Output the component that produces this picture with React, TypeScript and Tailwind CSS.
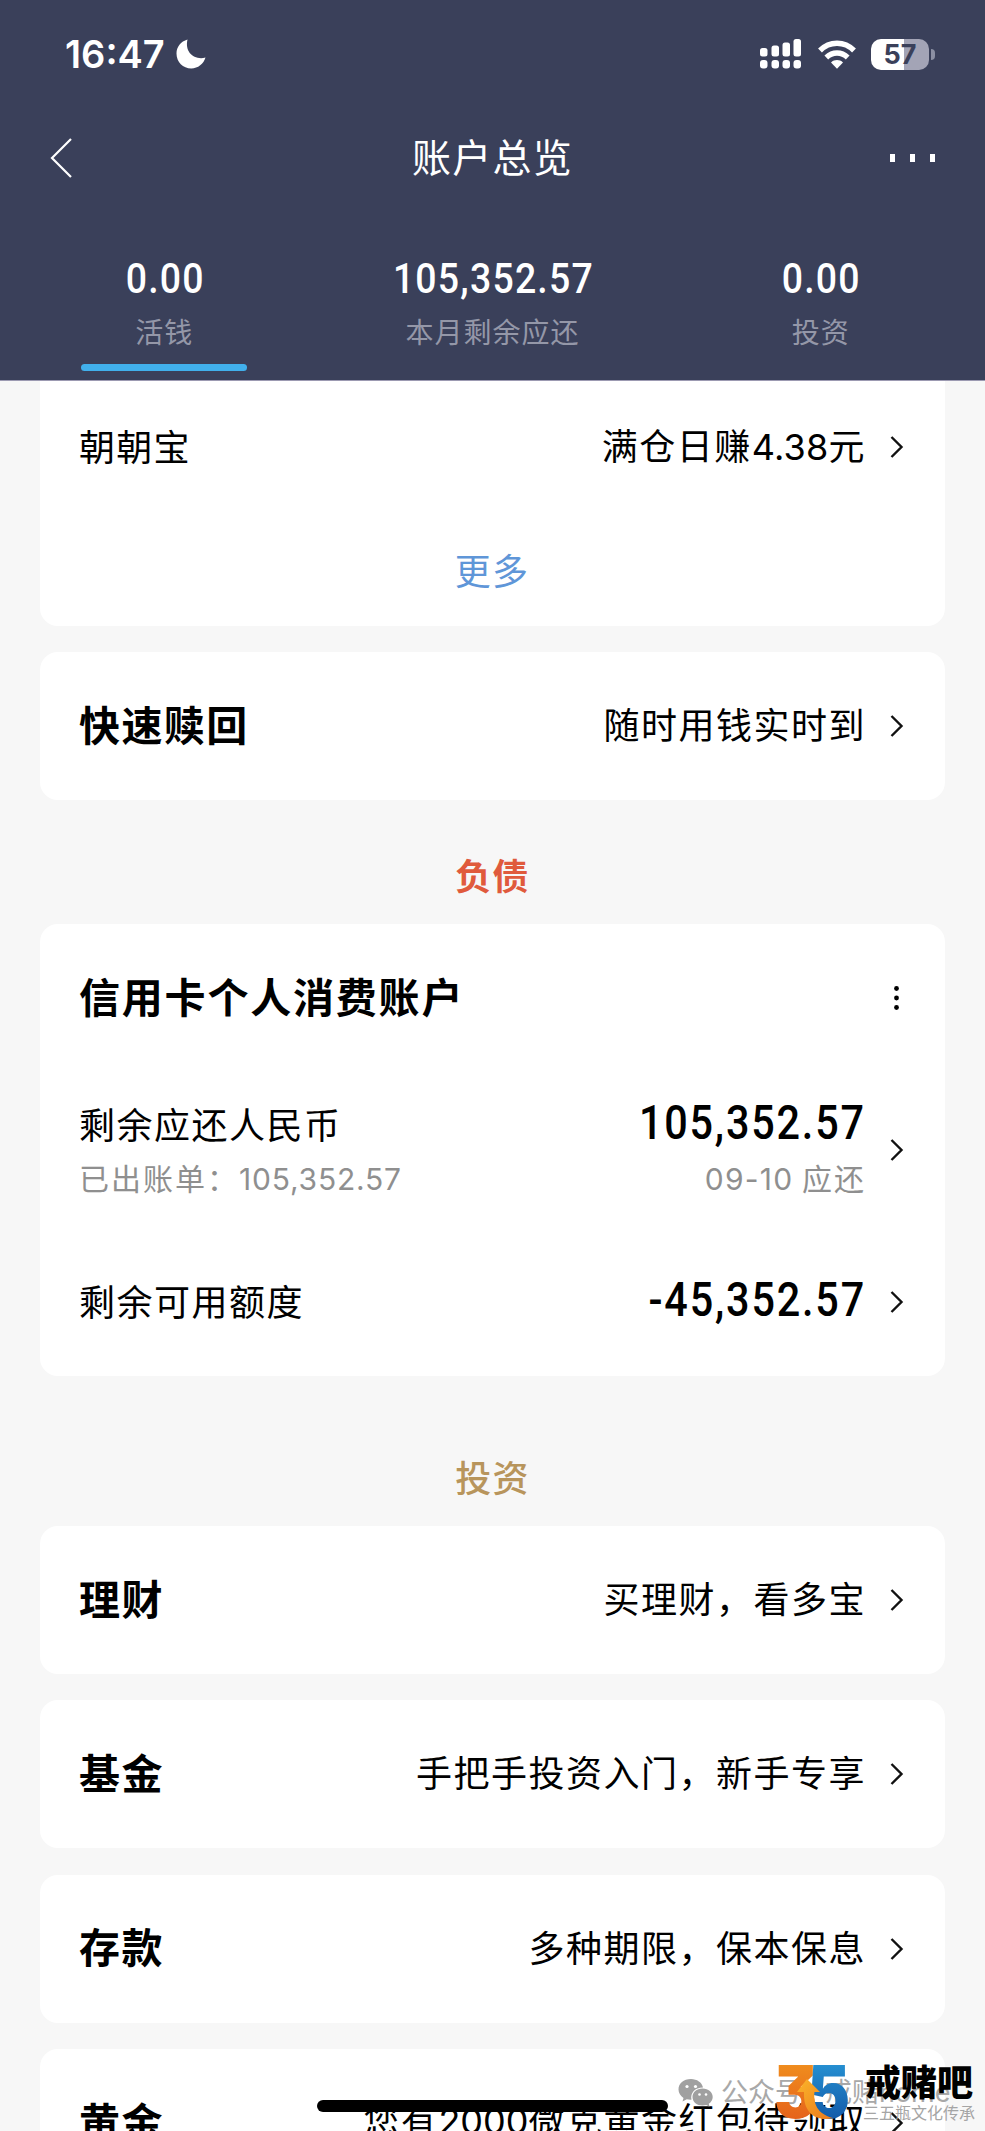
import React from "react";

/**
 * Account overview screen of the mobile bank.
 *
 * From top to bottom:
 * - status bar, navigation bar and the three summary tabs
 * - list of cards grouped by section (cash, debt, investment)
 * - home indicator and the publisher's mark in the bottom corner
 */

type Tab = { amount: string; label: string; active?: boolean };

const tabs: Tab[] = [
  { amount: "0.00", label: "活钱", active: true },
  { amount: "105,352.57", label: "本月剩余应还" },
  { amount: "0.00", label: "投资" },
];

type RowProps = { title: string; hint: React.ReactNode };

const investments: RowProps[] = [
  { title: "理财", hint: "买理财，看多宝" },
  { title: "基金", hint: "手把手投资入门，新手专享" },
  { title: "存款", hint: "多种期限，保本保息" },
  {
    title: "黄金",
    hint: (
      <>
        您有<span className="font-['Inter'] tracking-normal">2000</span>
        微克黄金红包待领取
      </>
    ),
  },
];

const Chevron = () => (
  <svg
    className="ml-[24px] mr-[1px] h-[24px] w-[14px] shrink-0"
    viewBox="0 0 14 24"
    fill="none"
    stroke="#111"
    strokeWidth="2.4"
  >
    <path d="M1.5 2 L11.5 12 L1.5 22" />
  </svg>
);

const StatusBar = () => (
  <div className="flex h-[108px] items-center pl-[65px] pr-[50px]">
    <span className="font-['Inter'] text-[38px] font-semibold leading-none">
      16:47
    </span>
    <svg className="ml-[11px] h-[30px] w-[30px]" viewBox="0 0 30 30" fill="#fff">
      <path d="M11.5 0.5 C4.8 2.4 0.5 8 0.5 14.5 C0.5 23 7 29.5 15.3 29.5 C22 29.5 27.6 25 29.5 18.6 C18 21.5 8.5 13 11.5 0.5 Z" />
    </svg>

    {/* Dual SIM signal */}
    <svg className="ml-auto h-[30px] w-[41px]" viewBox="0 0 41 30" fill="#fff">
      <rect x="0" y="9" width="7.5" height="8.5" rx="2.5" />
      <rect x="11.5" y="6.5" width="7.5" height="11" rx="2.5" />
      <rect x="22.5" y="3.5" width="7.5" height="14" rx="2.5" />
      <rect x="33.5" y="0" width="7.5" height="17.5" rx="2.5" />
      <rect x="0" y="21" width="7.5" height="8.5" rx="3" />
      <rect x="11.5" y="21" width="7.5" height="8.5" rx="3" />
      <rect x="22.5" y="21" width="7.5" height="8.5" rx="3" />
      <rect x="33.5" y="21" width="7.5" height="8.5" rx="3" />
    </svg>
    <svg className="ml-[17px] h-[29px] w-[38px]" viewBox="0 0 38 29" fill="none">
      <path d="M2 10.5 C11.5 0.8 26.5 0.8 36 10.5" stroke="#fff" strokeWidth="5.4" />
      <path d="M8.3 17.5 C14.5 11.5 23.5 11.5 29.7 17.5" stroke="#fff" strokeWidth="5.4" />
      <path d="M13 22.5 C16.5 19.3 21.5 19.3 25 22.5 L19 28.8 Z" fill="#fff" />
    </svg>
    <div className="ml-[15px] flex h-[31px] w-[58px] items-center justify-center rounded-[10px] bg-[linear-gradient(90deg,#fff_57%,#a3a4b6_57%)]">
      <span className="font-['Inter'] text-[27px] font-bold leading-none text-[#3a405a]">
        57
      </span>
    </div>
    <div className="ml-[2px] h-[11px] w-[4px] rounded-r-full bg-[#8b8fa3]" />
  </div>
);

const NavBar = () => (
  <div className="flex h-[100px] items-center justify-between px-[50px]">
    <svg
      className="h-[40px] w-[45px]"
      viewBox="0 0 45 40"
      fill="none"
      stroke="#fff"
      strokeWidth="2.2"
    >
      <path d="M21 1 L2 20 L21 39" />
    </svg>
    <h1 className="-mt-[6px] text-[39px] font-normal leading-none tracking-[1.2px]">
      账户总览
    </h1>
    <div className="flex gap-[15px]">
      <i className="h-[8px] w-[5px] bg-white" />
      <i className="h-[8px] w-[5px] bg-white" />
      <i className="h-[8px] w-[5px] bg-white" />
    </div>
  </div>
);

const SummaryTabs = () => (
  <div className="grid grid-cols-3">
    {tabs.map((tab, i) => (
      <div key={i} className="flex flex-col items-center">
        <span className="scale-x-[0.87] pl-[2px] font-['Roboto'] text-[43px] font-medium leading-[50px] tracking-[1.4px]">
          {tab.amount}
        </span>
        <span className="mt-[8px] text-[28px] leading-[40px] tracking-[1px] text-[#9497a8]">
          {tab.label}
        </span>
        {tab.active && (
          <div className="mt-[13px] h-[7px] w-[166px] rounded-full bg-[#41b0ec]" />
        )}
      </div>
    ))}
  </div>
);

const Row = ({ title, hint }: RowProps) => (
  <div className="flex h-[148px] shrink-0 items-center rounded-[18px] bg-white pl-[39px] pr-[40px]">
    <h2 className="-mt-[5px] text-[41px] font-bold tracking-[1.4px]">{title}</h2>
    <span className="-mt-[6px] ml-auto text-[36px] tracking-[1.5px]">{hint}</span>
    <Chevron />
  </div>
);

const Amount = ({ children }: { children: React.ReactNode }) => (
  <span className="origin-right scale-x-[0.87] font-['Roboto'] text-[47.5px] font-medium leading-[50px] tracking-[2.1px]">
    {children}
  </span>
);

const CreditCard = () => (
  <div className="h-[452px] rounded-[18px] bg-white pl-[39px] pr-[40px]">
    <div className="flex h-[148px] items-center justify-between">
      <h2 className="-mt-[4px] text-[41px] font-bold tracking-[1.8px]">
        信用卡个人消费账户
      </h2>
      <svg className="mr-[6px] h-[24px] w-[5px]" viewBox="0 0 5 24">
        <circle cx="2.5" cy="2.5" r="2.4" />
        <circle cx="2.5" cy="12" r="2.4" />
        <circle cx="2.5" cy="21.5" r="2.4" />
      </svg>
    </div>
    <div className="flex h-[156px] items-center">
      <div className="flex flex-col pt-[2px]">
        <span className="text-[36px] leading-[54px] tracking-[1.5px]">
          剩余应还人民币
        </span>
        <span className="text-[30px] leading-[54px] tracking-[2px] text-[#8f8f8f]">
          已出账单：
          <span className="font-['Inter'] tracking-[0.8px]">105,352.57</span>
        </span>
      </div>
      <div className="ml-auto flex flex-col items-end pt-[3px]">
        <Amount>105,352.57</Amount>
        <span className="pt-[2px] text-[30px] leading-[54px] tracking-[2px] text-[#8f8f8f]">
          <span className="font-['Inter'] tracking-[1.2px]">09-10</span> 应还
        </span>
      </div>
      <Chevron />
    </div>
    <div className="flex h-[148px] items-center">
      <span className="-mt-[4px] text-[36px] tracking-[1.5px]">剩余可用额度</span>
      <span className="-mt-[5px] ml-auto flex">
        <Amount>-45,352.57</Amount>
      </span>
      <Chevron />
    </div>
  </div>
);

/** Publisher's mark lying over the last card. */
const Watermark = () => (
  <div>
    <div className="absolute left-[678px] top-[2078px] flex items-center text-[#a8a8a8]">
      <svg className="h-[28px] w-[35px]" viewBox="0 0 35 28" fill="#a0a0a0">
        <path d="M13 0 C5.5 0 0.5 4.5 0.5 10.5 C0.5 14 2.5 17 5.5 19 L4.5 22.5 L8.8 20.3 C10 20.6 12 20.8 13.5 20.7 C12 14 17 8.5 25 8.5 C24 3.5 19 0 13 0 Z" />
        <path d="M24.5 9.5 C18.5 9.5 14.5 13.3 14.5 18 C14.5 23 19 26.5 24.5 26.5 C26 26.5 27 26.3 28.2 26 L31.5 27.7 L30.8 24.8 C33.2 23.2 34.7 20.8 34.7 18 C34.7 13.3 30.5 9.5 24.5 9.5 Z" />
        <g fill="#fff">
          <circle cx="9" cy="7.5" r="1.6" />
          <circle cx="17.5" cy="7.5" r="1.6" />
          <circle cx="21.5" cy="15.5" r="1.3" />
          <circle cx="28" cy="15.5" r="1.3" />
        </g>
      </svg>
      <span className="-mt-[2px] ml-[8px] whitespace-pre text-[27px] leading-[30px]">
        公众号<span className="font-['Inter']"> · </span>戒赌
        <span className="font-['Inter']">home</span>
      </span>
    </div>
    <svg className="absolute left-[773px] top-[2062px] h-[60px] w-[78px]" viewBox="0 0 78 60">
      <defs>
        <linearGradient id="orange" x1="0" y1="0" x2="0" y2="1">
          <stop offset="0" stopColor="#f39a1e" />
          <stop offset="1" stopColor="#e2561b" />
        </linearGradient>
        <linearGradient id="blue" x1="0" y1="0" x2="0" y2="1">
          <stop offset="0" stopColor="#2ba0de" />
          <stop offset="1" stopColor="#0d4a9c" />
        </linearGradient>
        <linearGradient id="arrow" x1="0" y1="0" x2="1" y2="1">
          <stop offset="0" stopColor="#fbb42a" />
          <stop offset="1" stopColor="#ea7a1c" />
        </linearGradient>
      </defs>
      <g className="font-['Inter'] text-[73px] font-black [font-feature-settings:'cv09']">
        <text x="1" y="56" fill="url(#orange)" textLength="43" lengthAdjust="spacingAndGlyphs">
          3
        </text>
        <text x="34" y="56" fill="url(#blue)" textLength="43" lengthAdjust="spacingAndGlyphs">
          5
        </text>
      </g>
      <path
        d="M34 17 L47 30 L41.5 30 C40 41 44 52 60 56 C44 60 30 52 31 30 L24 30 Z"
        fill="url(#arrow)"
      />
    </svg>
    <span className="absolute left-[865px] top-[2060px] text-[36px] font-black leading-[40px]">
      戒赌吧
    </span>
    <span className="absolute left-[863px] top-[2102px] whitespace-nowrap text-[16px] leading-[20px] text-[#a5a5a5]">
      三五瓶文化传承
    </span>
  </div>
);

export default function App() {
  return (
    <div className="relative flex h-[2131px] w-[985px] flex-col overflow-hidden bg-[#f7f7f7] font-['Noto_Sans_CJK_SC',sans-serif] text-black">
      <header className="h-[381px] shrink-0 border-b border-[#9c9ab2] bg-[#3a405a] text-white">
        <StatusBar />
        <NavBar />
        <div className="pt-[45px]">
          <SummaryTabs />
        </div>
      </header>

      <main className="flex flex-col px-[40px]">
        <div className="h-[245px] rounded-b-[18px] bg-white pl-[39px] pr-[40px]">
          <div className="flex h-[132px] items-center text-[36px]">
            <span className="-mt-[4px] tracking-[1.3px]">朝朝宝</span>
            <span className="-mt-[3px] ml-auto tracking-[1.5px]">
              满仓日赚<span className="font-['Inter'] tracking-[0.2px]">4.38</span>元
            </span>
            <Chevron />
          </div>
          <div className="flex h-[113px] justify-center text-[36px] tracking-[1.3px] text-[#5f96d8]">
            <span className="mt-[29px] leading-[54px]">更多</span>
          </div>
        </div>

        <div className="mt-[26px]">
          <Row title="快速赎回" hint="随时用钱实时到" />
        </div>

        <h3 className="flex h-[124px] items-center justify-center pt-[24px] text-[36px] font-bold tracking-[1.3px] text-[#e05a3c]">
          负债
        </h3>
        <CreditCard />

        <h3 className="flex h-[150px] items-center justify-center pt-[49px] text-[36px] font-medium tracking-[1.3px] text-[#b8955c]">
          投资
        </h3>
        <div className="flex flex-col gap-[26.3px]">
          {investments.map((item) => (
            <Row key={item.title} {...item} />
          ))}
        </div>
      </main>

      {/* Home indicator */}
      <div className="absolute left-[317px] top-[2100px] h-[12px] w-[351px] rounded-full bg-black" />
      <Watermark />
    </div>
  );
}
